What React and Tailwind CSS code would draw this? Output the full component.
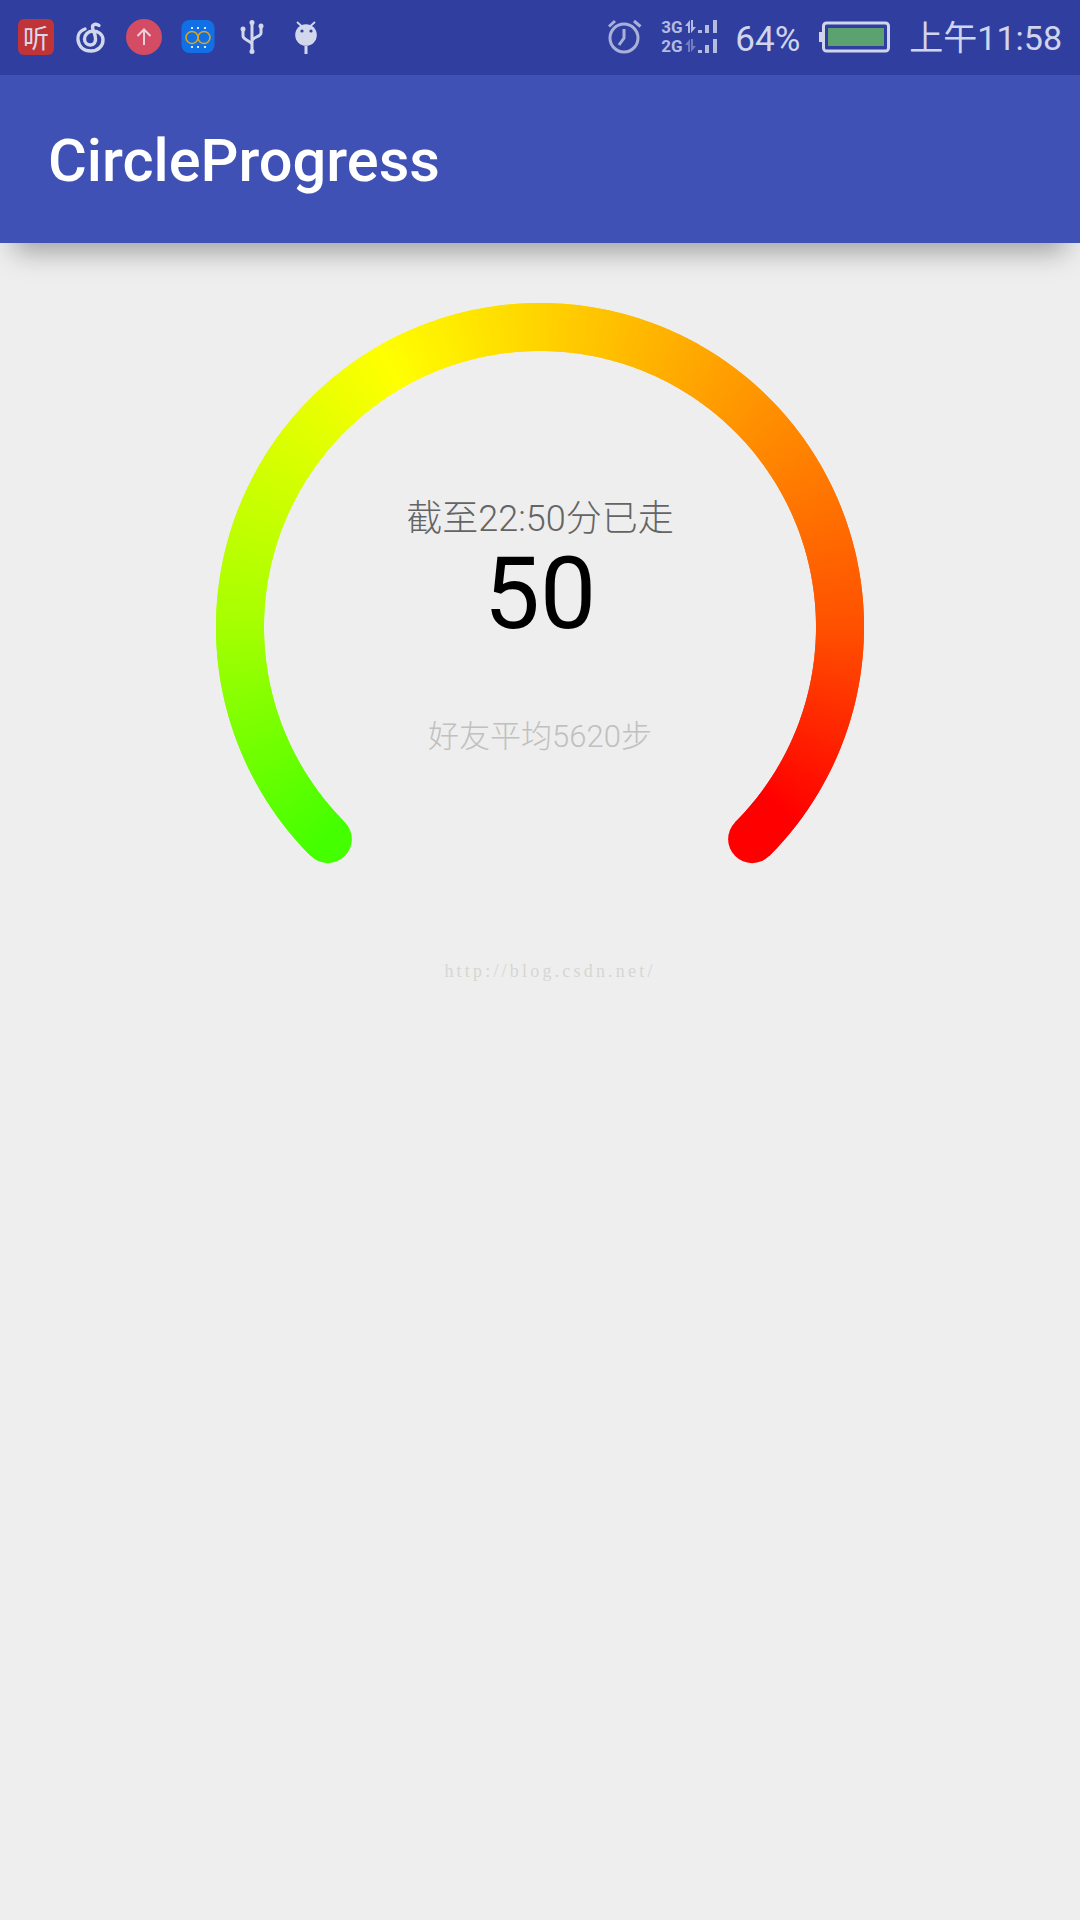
const SWEEP = 270;
const R = 300;
const C = 324;

// piecewise stops read off the sweep gradient of the gauge
const arcColor = (a) => {
  const r = a < 45 ? 68 + (97 * a) / 45 : a < 105 ? 165 + (90 * (a - 45)) / 60 : 255;
  const g = a < 105 ? 255 : a < 225 ? 255 - (175 * (a - 105)) / 120 : Math.max(0, 80 - (80 * (a - 225)) / 37);
  return `rgb(${Math.round(r)},${Math.round(g)},0)`;
};

const point = (a) => {
  const rad = ((a - 135) * Math.PI) / 180;
  return [C + R * Math.sin(rad), C - R * Math.cos(rad)];
};

const Gauge = () => {
  const segments = [];
  for (let a = 0; a < SWEEP; a += 0.5) {
    const [x1, y1] = point(a);
    const [x2, y2] = point(Math.min(a + 1, SWEEP));
    segments.push(
      <path key={a} d={`M${x1} ${y1}A${R} ${R} 0 0 1 ${x2} ${y2}`} stroke={arcColor(a)} strokeWidth="48" fill="none" />
    );
  }
  const [sx, sy] = point(0);
  const [ex, ey] = point(SWEEP);
  return (
    <svg width="648" height="561" viewBox="0 0 648 561" className="col-start-1 row-start-1">
      <circle cx={sx} cy={sy} r="24" fill={arcColor(0)} />
      <circle cx={ex} cy={ey} r="24" fill={arcColor(SWEEP)} />
      {segments}
    </svg>
  );
};

const StatusLeft = () => (
  <div className="flex gap-[18px] h-9">
    <div className="w-9 h-9 rounded-md bg-[#c03337] flex items-center justify-center text-[26px] leading-none text-[#d7d9ea] font-['Noto_Sans_CJK_SC',sans-serif]">
      听
    </div>
    {/* music swirl */}
    <svg width="36" height="36" viewBox="72 19 36 36" fill="none" stroke="#d3d7ec" strokeWidth="3.4" strokeLinecap="round">
      <path d="M85 29C79 31 77.500 36 78 40C79 47 84 51 91 51C98 51 103 46 103 40C103 34 98 31 93 31C88 31 84.500 35 84.500 39C84.500 43 87.500 45 90.500 45C94 45 96 42 95.500 38C95 33 92.500 30 92.500 27C92.500 24.500 96 23 99 25.500" />
    </svg>
    {/* upload */}
    <svg width="36" height="36" viewBox="126 19 36 36" fill="none">
      <circle cx="144" cy="37" r="18" fill="#d34c63" />
      <path d="M144 45V29.500M137.500 36L144 29.500L150.500 36" stroke="#ecd0da" strokeWidth="2" />
    </svg>
    {/* infinity app */}
    <svg width="36" height="36" viewBox="180 19 36 36" fill="none">
      <rect x="181.500" y="20" width="33" height="33" rx="8" fill="#1270e6" />
      <circle cx="192" cy="37.500" r="6" stroke="#d9a41e" strokeWidth="1.600" />
      <circle cx="204" cy="37.500" r="6" stroke="#d9a41e" strokeWidth="1.600" />
      <g fill="#dbe8fb">
        <rect x="191" y="27" width="2" height="2" />
        <rect x="197" y="27" width="2" height="2" />
        <rect x="204" y="27" width="2" height="2" />
        <rect x="191" y="46" width="2" height="2" />
        <rect x="197" y="46" width="2" height="2" />
        <rect x="204" y="46" width="2" height="2" />
      </g>
    </svg>
    {/* usb */}
    <svg width="36" height="36" viewBox="234 19 36 36" fill="none" stroke="#d3d7ec" strokeWidth="3">
      <path d="M252 23V51M243 29V36C243 40 252 41 252 45M261 26V33C261 37 252 37 252 41" />
      <g fill="#d3d7ec" stroke="none">
        <circle cx="252" cy="22.500" r="2.500" />
        <circle cx="243" cy="29" r="2.500" />
        <circle cx="261" cy="26" r="2.500" />
        <circle cx="252" cy="51.500" r="2.500" />
      </g>
    </svg>
    {/* android debug */}
    <svg width="36" height="36" viewBox="288 19 36 36" fill="none">
      <circle cx="306" cy="35" r="10.800" fill="#d3d7ec" />
      <path d="M297 22L302 26.500M315 22L310 26.500" stroke="#d3d7ec" strokeWidth="1.800" />
      <path d="M306 46V54" stroke="#d3d7ec" strokeWidth="3" />
      <circle cx="302" cy="31" r="1.600" fill="#303f9f" />
      <circle cx="311" cy="31" r="1.600" fill="#303f9f" />
    </svg>
  </div>
);

const StatusRight = () => (
  <div className="flex items-center h-9 text-[#d0d5ec] font-['Roboto','Noto_Sans_CJK_SC',sans-serif]">
    {/* alarm */}
    <svg width="34" height="36" viewBox="607 19 34 36" fill="none" stroke="#a9b1db" strokeWidth="3">
      <circle cx="623" cy="38" r="14" />
      <path d="M623 29V38L618 45M608 26.500L614 21M633 21L639.500 26.500" />
    </svg>
    {/* 3G / 2G signal */}
    <div className="ml-[19px] flex flex-col w-[57px] text-[#b3bbe0] text-[17px] font-bold leading-[19px]">
      <div className="flex items-center h-[19px]">
        <span className="w-[23px]">3G</span>
        <svg width="34" height="19" viewBox="0 0 34 19" fill="#b3bbe0">
          <path d="M1 8L6 2V15H4V8ZM7 2H9V9H12L7 15Z" />
          <rect x="14" y="12" width="4" height="3" />
          <rect x="21" y="7" width="4" height="8" />
          <rect x="29" y="2" width="4" height="13" />
        </svg>
      </div>
      <div className="flex items-center h-[19px]">
        <span className="w-[23px]">2G</span>
        <svg width="34" height="19" viewBox="0 0 34 19" fill="#b3bbe0">
          <path d="M1 8L6 2V15H4V8ZM7 2H9V9H12L7 15Z" opacity="0.5" />
          <rect x="14" y="13" width="4" height="3" />
          <rect x="21" y="8" width="4" height="8" />
          <rect x="29" y="2" width="4" height="14" />
        </svg>
      </div>
    </div>
    <span className="ml-[17px] pt-1 text-[35px] leading-none">64%</span>
    {/* battery */}
    <svg width="71" height="32" viewBox="820 21 71 32" className="ml-[19px]">
      <rect x="820" y="32" width="3" height="10" fill="#d0d5ec" />
      <rect x="824.500" y="23" width="65" height="28" rx="3" fill="none" stroke="#d0d5ec" strokeWidth="3" />
      <rect x="829" y="28" width="56" height="18" fill="#5ca270" />
    </svg>
    <span className="ml-[19px] pt-0.5 text-[34px] leading-none">上午11:58</span>
  </div>
);

export default function App() {
  return (
    <div className="min-h-[1920px] bg-[#eeeeee] flex flex-col overflow-hidden font-['Roboto','Noto_Sans_CJK_SC',sans-serif]">
      {/* Status bar */}
      <div className="h-[75px] bg-[#303f9f] flex items-start justify-between pl-[18px] pr-[18px] pt-[19px]">
        <StatusLeft />
        <StatusRight />
      </div>

      {/* App bar */}
      <div className="h-[168px] bg-[#3f51b5] flex items-center pl-[48px] pt-[5px] shadow-[0_22px_26px_-14px_rgba(0,0,0,0.34)] relative">
        <h1 className="text-[59.500px] font-medium text-white leading-none">CircleProgress</h1>
      </div>

      {/* Gauge with its labels on top */}
      <div className="flex flex-col items-center pt-[60px]">
        <div className="grid w-[648px]">
          <Gauge />
          <div className="col-start-1 row-start-1 flex flex-col items-center pt-[192px]">
            <p className="text-[36px] leading-[48px] font-light text-[#646464]">截至22:50分已走</p>
            <p className="text-[100px] leading-[101px] text-black">50</p>
            <p className="mt-[71px] text-[31px] leading-[44px] font-light text-[#c0c0c0]">好友平均5620步</p>
          </div>
        </div>
        <p className="mt-[95px] ml-[20px] text-[18px] tracking-[3.2px] leading-[24px] text-[#d6d6d2] font-['Liberation_Serif',serif]">
          http://blog.csdn.net/
        </p>
      </div>
    </div>
  );
}
